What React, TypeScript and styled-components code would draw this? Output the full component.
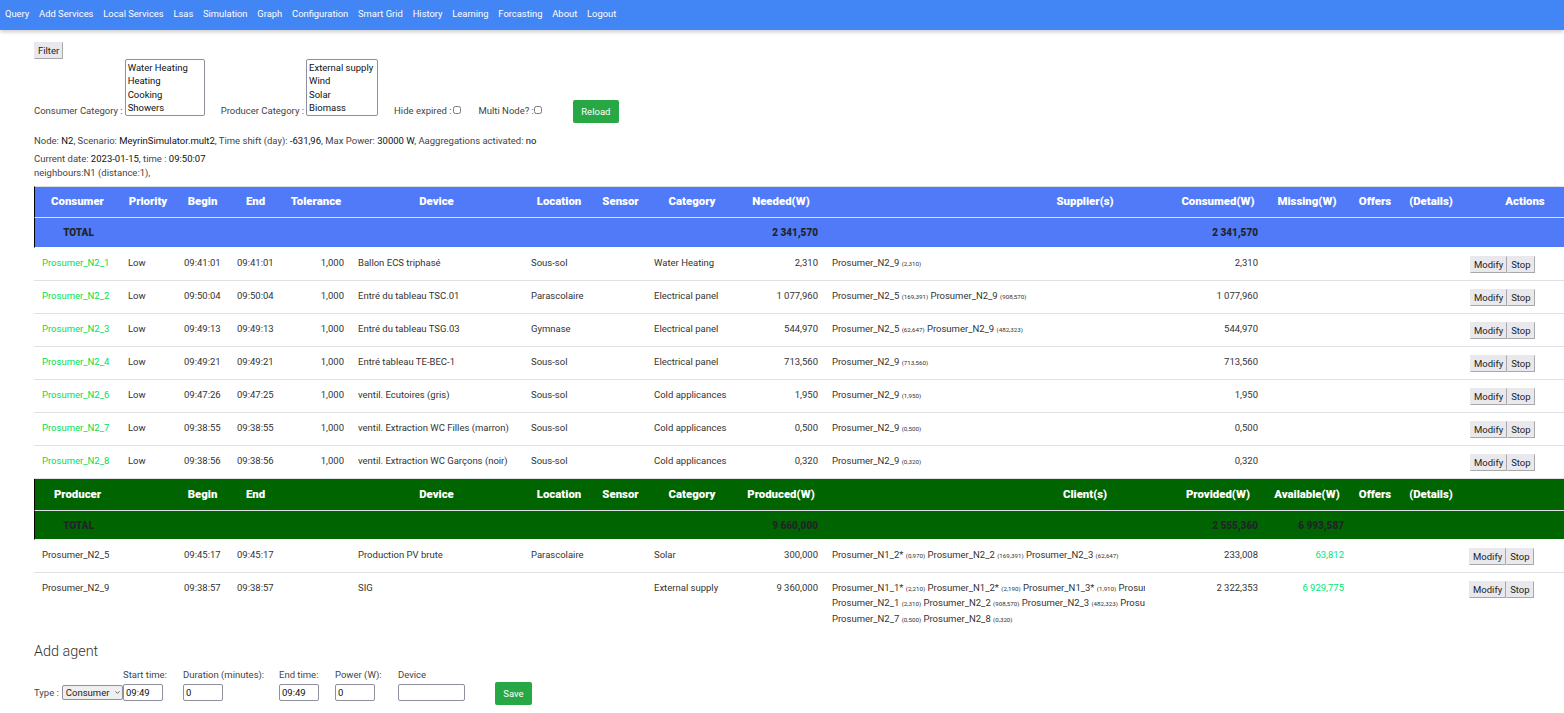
import React from "react";
import styled, { createGlobalStyle } from "styled-components";
import { ChevronDown } from "lucide-react";

const GlobalStyle = createGlobalStyle`
  html, body {
    margin: 0;
    padding: 0;
    background: #fff;
  }
  body {
    font-family: Roboto, "Liberation Sans", sans-serif;
    font-size: 9.5px;
    color: #333;
  }
`;

const NavBar = styled.nav`
  display: flex;
  align-items: flex-start;
  gap: 9.8px;
  height: 30px;
  padding: 7px 0 0 5px;
  box-sizing: border-box;
  background: #4285f4;
  box-shadow: 0 2px 4px rgba(0, 0, 0, 0.2);
`;

const NavLink = styled.a`
  color: #fff;
  font-size: 9.4px;
  line-height: 13px;
`;

const Content = styled.main`
  padding: 12px 0 0 34px;
`;

const OutsetButton = styled.button`
  font-family: Roboto, "Liberation Sans", sans-serif;
  font-size: 9.5px;
  color: #222;
  background: #e9e9ed;
  border: 1px solid #e9e9ed;
  border-right-color: #a8a8a8;
  border-bottom-color: #a8a8a8;
  padding: 0 3px;
  height: 17px;
  line-height: 15px;
`;

const FilterRow = styled.div`
  display: flex;
  align-items: flex-start;
  height: 64px;
  margin-top: 0;
`;

const FieldLabel = styled.label<{ $left: number }>`
  display: flex;
  align-items: flex-end;
  height: 58px;
  color: #444;
  margin-left: ${({ $left }) => $left}px;
  line-height: 13px;
  white-space: nowrap;
`;

const ListBox = styled.select<{ $w: number }>`
  align-self: flex-start;
  width: ${({ $w }) => $w}px;
  height: 57px;
  margin: 0 0 0 2px;
  padding: 2px 0 0;
  box-sizing: border-box;
  font-family: Roboto, "Liberation Sans", sans-serif;
  font-size: 9.5px;
  color: #111;
  background: #fff;
  border: 1px solid #8f8f9d;
  border-radius: 2px;
  overflow: hidden;
  option {
    padding: 0 2px;
    min-height: 13.4px;
    line-height: 13.4px;
  }
`;

const CheckBox = styled.input<{ $gap: number }>`
  width: 8px;
  height: 8px;
  margin: 0 0 3px ${({ $gap }) => $gap}px;
`;

const GreenButton = styled.button<{ $w: number; $h: number }>`
  width: ${({ $w }) => $w}px;
  height: ${({ $h }) => $h}px;
  padding: 0;
  font-family: Roboto, "Liberation Sans", sans-serif;
  font-size: 9.5px;
  color: #fff;
  background: #28a745;
  border: 0;
  border-radius: 2px;
`;

const ReloadWrap = styled.div`
  margin: 41px 0 0 31px;
`;

const InfoLine = styled.div<{ $top: number }>`
  margin-top: ${({ $top }) => $top}px;
  line-height: 14px;
  color: #444;
  b {
    font-weight: 400;
    color: #111;
  }
`;

const GridTable = styled.table`
  width: 1530px;
  table-layout: fixed;
  border-collapse: separate;
  border-spacing: 0;
  margin-top: 6px;
`;

const Col = styled.col<{ $w: number }>`
  width: ${({ $w }) => $w}px;
`;

const HeadRow = styled.tr<{ $bg: string; $top?: boolean }>`
  background: ${({ $bg }) => $bg};
  th {
    box-sizing: border-box;
    height: 32px;
    padding: 0 0 2px;
    text-align: center;
    font-size: 11.4px;
    font-weight: 900;
    color: #fff;
    border-top: ${({ $top }) => ($top ? "1px solid #dee2e6" : "0")};
    border-bottom: 1px solid #dee2e6;
  }
  th:first-child {
    border-left: 1px solid #000;
  }
`;

const TotalRow = styled.tr<{ $bg: string; $h: number }>`
  td {
    box-sizing: border-box;
    height: ${({ $h }) => $h}px;
    padding: 0 6px 0 8px;
    text-align: right;
    font-size: 10px;
    font-weight: 900;
    color: #212529;
    background: ${({ $bg }) => $bg};
    border-bottom: 1px solid #fff;
  }
  td:first-child {
    border-left: 1px solid #000;
    text-align: center;
  }
`;

const HeadOffset = styled.th<{ $pl: number }>`
  && {
    padding-left: ${({ $pl }) => $pl}px;
  }
`;

const Row = styled.tr`
  td {
    box-sizing: border-box;
    height: 33px;
    padding: 8px 6px 0 8px;
    vertical-align: top;
    line-height: 14.3px;
    white-space: nowrap;
    border-bottom: 1px solid #dee2e6;
  }
`;

const LastRow = styled(Row)`
  td {
    height: 57px;
    border-bottom: 0;
  }
`;

const Num = styled.td`
  text-align: right;
`;

const AvailableNum = styled(Num)`
  color: #00e676;
`;

const AgentName = styled.td`
  color: #00e050;
`;

const LinesClip = styled.div`
  width: 313px;
  overflow: hidden;
  white-space: nowrap;
`;

const Small = styled.small`
  font-size: 6.2px;
`;

const ActionGroup = styled.div<{ $shift: number }>`
  display: flex;
  margin-left: ${({ $shift }) => $shift}px;
`;

const AddTitle = styled.h3`
  margin: 13px 0 0;
  font-size: 14.4px;
  line-height: 18px;
  font-weight: 300;
  color: #333;
`;

const AddForm = styled.div`
  display: flex;
  align-items: flex-start;
  margin-top: 8px;
`;

const TypeField = styled.label`
  display: flex;
  align-items: center;
  gap: 3px;
  width: 89px;
  margin-top: 16px;
  color: #444;
`;

const SelectWrap = styled.div`
  position: relative;
  width: 61px;
  height: 15px;
`;

const TypeSelect = styled.select`
  appearance: none;
  width: 100%;
  height: 100%;
  padding: 0 0 0 3px;
  box-sizing: border-box;
  font-family: Roboto, "Liberation Sans", sans-serif;
  font-size: 9.5px;
  color: #222;
  background: #efefef;
  border: 1px solid #8f8f9d;
  border-radius: 2px;
`;

const SelectArrow = styled(ChevronDown)`
  position: absolute;
  right: 2px;
  top: 4px;
  pointer-events: none;
  color: #333;
`;

const InputField = styled.label<{ $w: number; $gap: number }>`
  display: flex;
  flex-direction: column;
  gap: 3px;
  width: ${({ $w }) => $w}px;
  margin-right: ${({ $gap }) => $gap}px;
  color: #444;
  white-space: nowrap;
  line-height: 12px;
`;

const TextInput = styled.input`
  width: 100%;
  height: 17px;
  padding: 0 2px;
  margin: 0;
  box-sizing: border-box;
  font-family: Roboto, "Liberation Sans", sans-serif;
  font-size: 9.5px;
  color: #111;
  border: 1px solid #8f8f9d;
  border-radius: 2px;
`;

const SaveWrap = styled.div`
  margin-top: 13px;
`;

const NAV = [
  "Query", "Add Services", "Local Services", "Lsas", "Simulation", "Graph", "Configuration",
  "Smart Grid", "History", "Learning", "Forcasting", "About", "Logout",
];

const COLS = [86, 56, 53, 53, 68, 173, 72, 51, 92, 86, 348, 92, 86, 50, 62, 102];

type Part = { name: string; val: string };

const consumers = [
  { id: "Prosumer_N2_1", begin: "09:41:01", end: "09:41:01", device: "Ballon ECS triphasé", loc: "Sous-sol", cat: "Water Heating", need: "2,310", sup: [{ name: "Prosumer_N2_9", val: "2,310" }] },
  { id: "Prosumer_N2_2", begin: "09:50:04", end: "09:50:04", device: "Entré du tableau TSC.01", loc: "Parascolaire", cat: "Electrical panel", need: "1 077,960", sup: [{ name: "Prosumer_N2_5", val: "169,391" }, { name: "Prosumer_N2_9", val: "908,570" }] },
  { id: "Prosumer_N2_3", begin: "09:49:13", end: "09:49:13", device: "Entré du tableau TSG.03", loc: "Gymnase", cat: "Electrical panel", need: "544,970", sup: [{ name: "Prosumer_N2_5", val: "62,647" }, { name: "Prosumer_N2_9", val: "482,323" }] },
  { id: "Prosumer_N2_4", begin: "09:49:21", end: "09:49:21", device: "Entré tableau TE-BEC-1", loc: "Sous-sol", cat: "Electrical panel", need: "713,560", sup: [{ name: "Prosumer_N2_9", val: "713,560" }] },
  { id: "Prosumer_N2_6", begin: "09:47:26", end: "09:47:25", device: "ventil. Ecutoires (gris)", loc: "Sous-sol", cat: "Cold applicances", need: "1,950", sup: [{ name: "Prosumer_N2_9", val: "1,950" }] },
  { id: "Prosumer_N2_7", begin: "09:38:55", end: "09:38:55", device: "ventil. Extraction WC Filles (marron)", loc: "Sous-sol", cat: "Cold applicances", need: "0,500", sup: [{ name: "Prosumer_N2_9", val: "0,500" }] },
  { id: "Prosumer_N2_8", begin: "09:38:56", end: "09:38:56", device: "ventil. Extraction WC Garçons (noir)", loc: "Sous-sol", cat: "Cold applicances", need: "0,320", sup: [{ name: "Prosumer_N2_9", val: "0,320" }] },
];

const sigLines: Part[][] = [
  [{ name: "Prosumer_N1_1*", val: "2,210" }, { name: "Prosumer_N1_2*", val: "2,190" }, { name: "Prosumer_N1_3*", val: "1,910" }, { name: "Prosumer_N1_4*", val: "1,900" }],
  [{ name: "Prosumer_N2_1", val: "2,310" }, { name: "Prosumer_N2_2", val: "908,570" }, { name: "Prosumer_N2_3", val: "482,323" }, { name: "Prosumer_N2_4", val: "713,560" }],
  [{ name: "Prosumer_N2_7", val: "0,500" }, { name: "Prosumer_N2_8", val: "0,320" }],
];

const Parts = ({ parts }: { parts: Part[] }) => (
  <LinesClip>
    {parts.map((p) => (
      <span key={p.name}>
        {p.name} <Small>({p.val})</Small>{" "}
      </span>
    ))}
  </LinesClip>
);

const Actions = ({ shift }: { shift: number }) => (
  <ActionGroup $shift={shift}>
    <OutsetButton>Modify</OutsetButton>
    <OutsetButton>Stop</OutsetButton>
  </ActionGroup>
);

const App = () => {
  return (
    <>
      <GlobalStyle />
      <NavBar>
        {NAV.map((item) => (
          <NavLink key={item}>{item}</NavLink>
        ))}
      </NavBar>
      <Content>
        <OutsetButton>Filter</OutsetButton>
        <FilterRow>
          <FieldLabel $left={0}>
            Consumer Category :
            <ListBox $w={80} multiple size={4}>
              <option>Water Heating</option>
              <option>Heating</option>
              <option>Cooking</option>
              <option>Showers</option>
            </ListBox>
          </FieldLabel>
          <FieldLabel $left={16}>
            Producer Category :
            <ListBox $w={72} multiple size={4}>
              <option>External supply</option>
              <option>Wind</option>
              <option>Solar</option>
              <option>Biomass</option>
            </ListBox>
          </FieldLabel>
          <FieldLabel $left={16}>
            Hide expired :
            <CheckBox $gap={2} type="checkbox" />
          </FieldLabel>
          <FieldLabel $left={17}>
            Multi Node? :
            <CheckBox $gap={0} type="checkbox" />
          </FieldLabel>
          <ReloadWrap>
            <GreenButton $w={46} $h={23}>Reload</GreenButton>
          </ReloadWrap>
        </FilterRow>
        <InfoLine $top={11}>
          Node: <b>N2</b>, Scenario: <b>MeyrinSimulator.mult2</b>, Time shift (day): <b>-631,96</b>, Max Power: <b>30000 W</b>, Aaggregations activated: <b>no</b>
        </InfoLine>
        <InfoLine $top={4}>
          Current date: <b>2023-01-15</b>, time : <b>09:50:07</b>
        </InfoLine>
        <InfoLine $top={0}>neighbours:N1 (distance:1),</InfoLine>
        <GridTable>
          <colgroup>
            {COLS.map((w, i) => (
              <Col key={i} $w={w} />
            ))}
          </colgroup>
          <tbody>
            <HeadRow $bg="#517af8" $top>
              <th>Consumer</th>
              <th>Priority</th>
              <th>Begin</th>
              <th>End</th>
              <th>Tolerance</th>
              <th>Device</th>
              <th>Location</th>
              <th>Sensor</th>
              <th>Category</th>
              <th>Needed(W)</th>
              <HeadOffset $pl={174}>Supplier(s)</HeadOffset>
              <th>Consumed(W)</th>
              <th>Missing(W)</th>
              <th>Offers</th>
              <th>(Details)</th>
              <HeadOffset $pl={24}>Actions</HeadOffset>
            </HeadRow>
            <TotalRow $bg="#517af8" $h={30}>
              <td>TOTAL</td>
              <td colSpan={8} />
              <td>2 341,570</td>
              <td />
              <td>2 341,570</td>
              <td colSpan={4} />
            </TotalRow>
            {consumers.map((c) => (
              <Row key={c.id}>
                <AgentName>{c.id}</AgentName>
                <td>Low</td>
                <td>{c.begin}</td>
                <td>{c.end}</td>
                <Num>1,000</Num>
                <td>{c.device}</td>
                <td>{c.loc}</td>
                <td />
                <td>{c.cat}</td>
                <Num>{c.need}</Num>
                <td><Parts parts={c.sup} /></td>
                <Num>{c.need}</Num>
                <td />
                <td />
                <td />
                <td><Actions shift={0} /></td>
              </Row>
            ))}
            <HeadRow $bg="#006400">
              <th>Producer</th>
              <th />
              <th>Begin</th>
              <th>End</th>
              <th />
              <th>Device</th>
              <th>Location</th>
              <th>Sensor</th>
              <th>Category</th>
              <th>Produced(W)</th>
              <HeadOffset $pl={174}>Client(s)</HeadOffset>
              <th>Provided(W)</th>
              <th>Available(W)</th>
              <th>Offers</th>
              <th>(Details)</th>
              <th />
            </HeadRow>
            <TotalRow $bg="#006400" $h={29}>
              <td>TOTAL</td>
              <td colSpan={8} />
              <td>9 660,000</td>
              <td />
              <td>2 555,360</td>
              <td>6 993,587</td>
              <td colSpan={3} />
            </TotalRow>
            <Row>
              <td>Prosumer_N2_5</td>
              <td />
              <td>09:45:17</td>
              <td>09:45:17</td>
              <td />
              <td>Production PV brute</td>
              <td>Parascolaire</td>
              <td />
              <td>Solar</td>
              <Num>300,000</Num>
              <td>
                <Parts parts={[{ name: "Prosumer_N1_2*", val: "0,970" }, { name: "Prosumer_N2_2", val: "169,391" }, { name: "Prosumer_N2_3", val: "62,647" }]} />
              </td>
              <Num>233,008</Num>
              <AvailableNum>63,812</AvailableNum>
              <td />
              <td />
              <td><Actions shift={-1} /></td>
            </Row>
            <LastRow>
              <td>Prosumer_N2_9</td>
              <td />
              <td>09:38:57</td>
              <td>09:38:57</td>
              <td />
              <td>SIG</td>
              <td />
              <td />
              <td>External supply</td>
              <Num>9 360,000</Num>
              <td>
                {sigLines.map((line, i) => (
                  <Parts key={i} parts={line} />
                ))}
              </td>
              <Num>2 322,353</Num>
              <AvailableNum>6 929,775</AvailableNum>
              <td />
              <td />
              <td><Actions shift={-1} /></td>
            </LastRow>
          </tbody>
        </GridTable>
        <AddTitle>Add agent</AddTitle>
        <AddForm>
          <TypeField>
            Type :
            <SelectWrap>
              <TypeSelect defaultValue="Consumer">
                <option>Consumer</option>
                <option>Producer</option>
              </TypeSelect>
              <SelectArrow size={7} strokeWidth={2.5} />
            </SelectWrap>
          </TypeField>
          <InputField $w={40} $gap={20}>
            Start time:
            <TextInput defaultValue="09:49" />
          </InputField>
          <InputField $w={40} $gap={56}>
            Duration (minutes):
            <TextInput defaultValue="0" />
          </InputField>
          <InputField $w={40} $gap={16}>
            End time:
            <TextInput defaultValue="09:49" />
          </InputField>
          <InputField $w={40} $gap={23}>
            Power (W):
            <TextInput defaultValue="0" />
          </InputField>
          <InputField $w={67} $gap={30}>
            Device
            <TextInput />
          </InputField>
          <SaveWrap>
            <GreenButton $w={37} $h={23}>Save</GreenButton>
          </SaveWrap>
        </AddForm>
      </Content>
    </>
  );
};

export default App;
